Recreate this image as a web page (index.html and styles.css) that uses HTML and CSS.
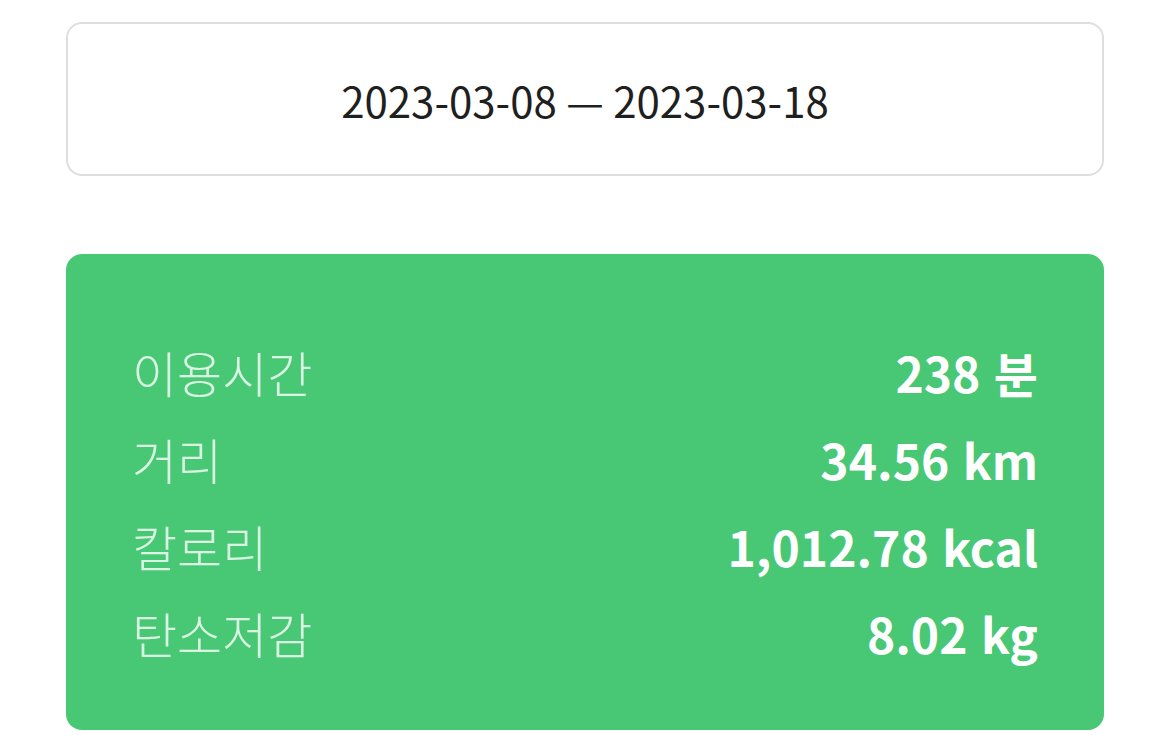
FILE: index.html
```html
<!DOCTYPE html>
<html lang="ko">
<head>
<meta charset="utf-8">
<link rel="stylesheet" href="styles.css">
</head>
<body>
<div class="page">
  <div class="range">2023-03-08 — 2023-03-18</div>
  <div class="summary">
    <div class="row"><span class="label">이용시간</span><span class="value">238 분</span></div>
    <div class="row"><span class="label">거리</span><span class="value">34.56 km</span></div>
    <div class="row"><span class="label">칼로리</span><span class="value">1,012.78 kcal</span></div>
    <div class="row"><span class="label">탄소저감</span><span class="value">8.02 kg</span></div>
  </div>
</div>
</body>
</html>
```

FILE: styles.css
```css
html, body {
  margin: 0;
  padding: 0;
  background: #ffffff;
}
body {
  font-family: "Noto Sans CJK KR", "Noto Sans", sans-serif;
}
.page {
  padding: 22px 66px 0 66px;
  display: flex;
  flex-direction: column;
  gap: 78px;
}
.range {
  height: 154px;
  box-sizing: border-box;
  border: 2px solid #dedede;
  border-radius: 16px;
  display: flex;
  align-items: center;
  justify-content: center;
  font-size: 42px;
  color: #1f1f1f;
}
.summary {
  background: #48c774;
  border-radius: 16px;
  padding: 74px 66px 54px 66px;
  display: flex;
  flex-direction: column;
}
.row {
  display: flex;
  justify-content: space-between;
  align-items: center;
  height: 87px;
}
.label {
  font-size: 49px;
  font-weight: 300;
  color: #daf4e3;
}
.value {
  font-size: 48px;
  font-weight: 700;
  color: #ffffff;
}
```
